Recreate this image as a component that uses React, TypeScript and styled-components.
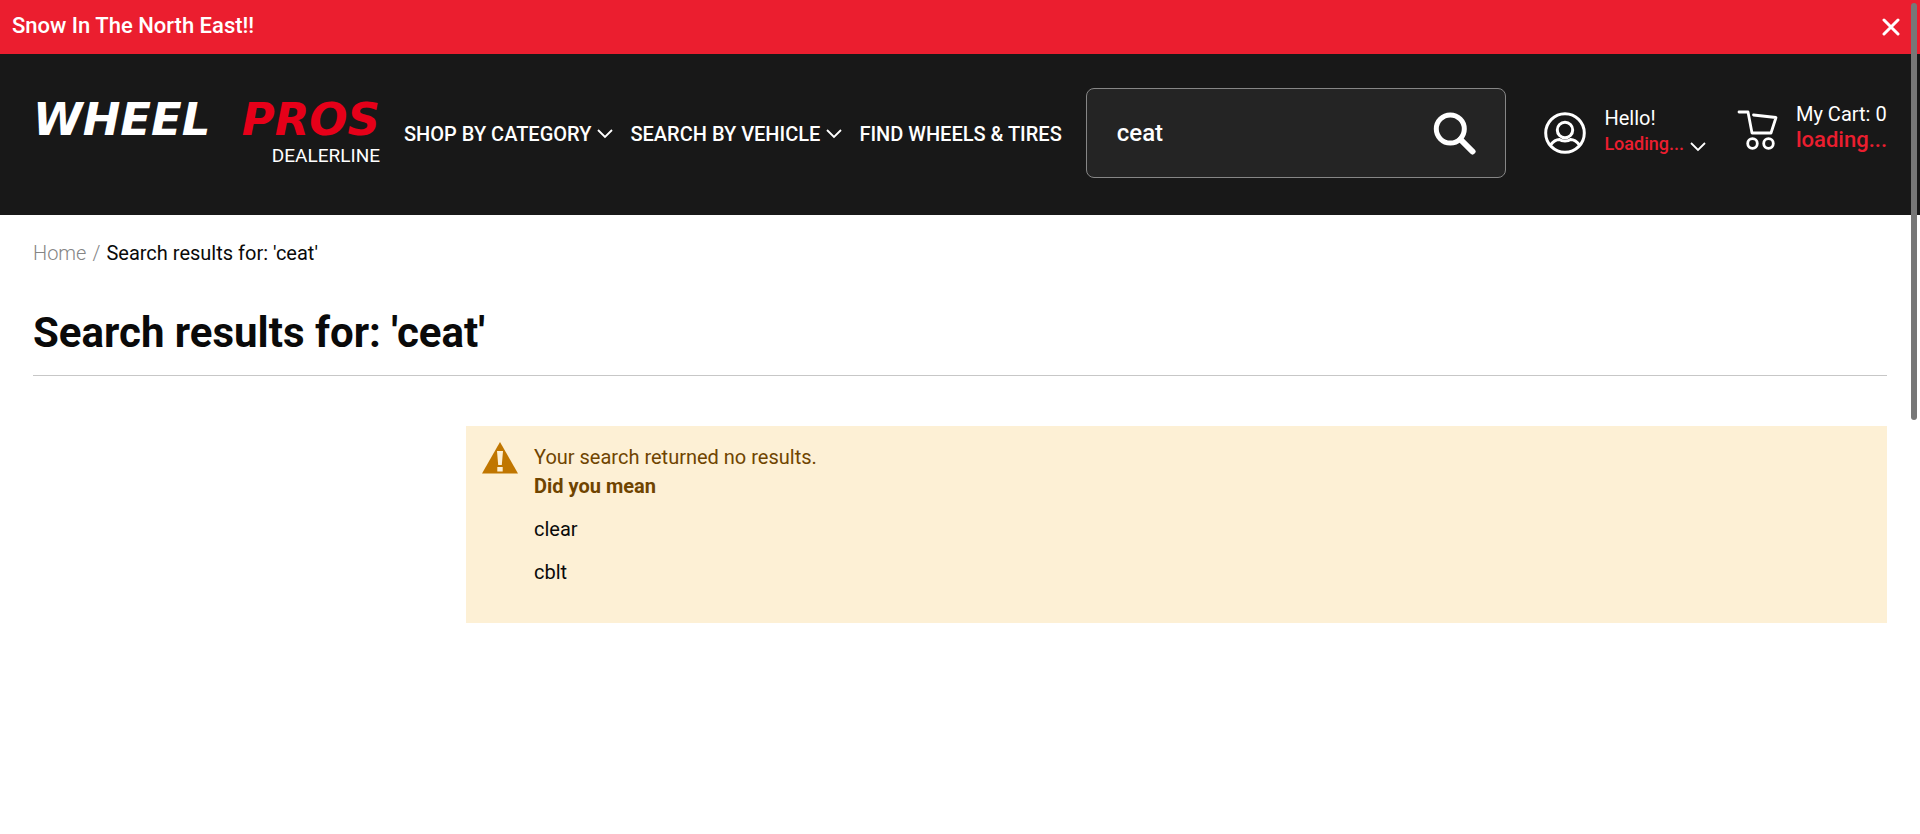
import React from "react";
import styled, { createGlobalStyle } from "styled-components";

const GlobalStyle = createGlobalStyle`
  *, *::before, *::after { box-sizing: border-box; }
  body {
    margin: 0;
    background: #fff;
    color: #0a0a0a;
    font-family: Roboto, "Liberation Sans", sans-serif;
    font-size: 20px;
    line-height: 28px;
  }
  a { color: inherit; text-decoration: none; }
  button { border: 0; padding: 0; background: none; color: inherit; font: inherit; cursor: pointer; }
  svg { display: block; flex: none; }
`;

const Banner = styled.aside`
  display: flex;
  align-items: center;
  justify-content: space-between;
  height: 54px;
  padding: 0 20px 0 12px;
  background: #eb1e2f;
  color: #fff;
  font-size: 22px;
  font-weight: 500;
`;

const BannerText = styled.p`
  margin: 0;
  padding-bottom: 2px;
`;

const Header = styled.header`
  display: flex;
  align-items: center;
  min-height: 161px;
  padding: 0 33px 3px;
  background: #181818;
  color: #fff;
`;

const Brand = styled.a`
  flex: none;
  width: 347px;
  margin-right: 24px;
  padding-top: 4px;
`;

const BrandName = styled.span`
  display: flex;
  justify-content: space-between;
  font: italic bold 45px/36px "DejaVu Sans", sans-serif;
`;

const BrandAccent = styled.span`
  color: #e60019;
`;

const BrandLine = styled.span`
  display: block;
  margin-top: 6px;
  font-size: 19px;
  line-height: 24px;
  text-align: right;
`;

const Nav = styled.nav`
  display: flex;
  flex: none;
  gap: 17px;
  margin-right: 24px;
`;

const NavItem = styled.a`
  display: flex;
  align-items: center;
  gap: 6px;
  padding-top: 2px;
  font-weight: 500;
  white-space: nowrap;
`;

const SearchForm = styled.form`
  display: flex;
  flex: 1;
  min-width: 0;
  align-items: center;
  height: 90px;
  padding: 0 29px 0 30px;
  border: 1px solid #868686;
  border-radius: 8px;
  background: #242424;
`;

const SearchInput = styled.input`
  flex: 1;
  min-width: 0;
  padding: 0;
  border: 0;
  outline: 0;
  background: transparent;
  color: #fff;
  font: 500 24px/28px Roboto, sans-serif;
`;

const Account = styled.button`
  display: flex;
  align-items: center;
  gap: 18px;
  margin-left: 38px;
  text-align: left;
`;

const Cart = styled.a`
  display: flex;
  align-items: center;
  gap: 18px;
  margin-left: 31px;
  padding-bottom: 8px;
`;

const Stack = styled.span`
  display: flex;
  flex-direction: column;
  padding-bottom: 5px;
  line-height: 26px;
  white-space: nowrap;
`;

const Status = styled.span<{ $large?: boolean }>`
  display: flex;
  align-items: center;
  gap: 6px;
  color: #eb1e2f;
  font-size: ${(p) => (p.$large ? 22 : 18)}px;
  font-weight: 500;

  svg { margin-top: 6px; }
`;

const Main = styled.main`
  padding: 24px 33px 0;
`;

const Breadcrumbs = styled.nav`
  display: flex;
  gap: 6px;
`;

const Crumb = styled.a`
  color: #858585;
  font-weight: 300;
`;

const Title = styled.h1`
  margin: 0;
  padding: 40px 0 16px;
  border-bottom: 1px solid #c7c7c7;
  font-size: 42px;
  line-height: 52px;
  font-weight: 700;
`;

const Notice = styled.section`
  display: flex;
  gap: 16px;
  margin: 50px 0 0 433px;
  padding: 16px 16px 36px;
  background: #fdf0d5;
  color: #6f4400;
`;

const NoticeBody = styled.div`
  padding-top: 1px;
  line-height: 29px;
`;

const Lead = styled.p`
  margin: 0;
`;

const Suggestions = styled.dl`
  margin: 0;
`;

const Term = styled.dt`
  font-weight: 700;
`;

const Suggestion = styled.dd`
  margin: 14px 0 0;
  color: #0a0a0a;
`;

const ScrollThumb = styled.div`
  position: fixed;
  top: 3px;
  right: 3px;
  width: 6px;
  height: 50%;
  border-radius: 3px;
  background: #777;
`;

const Chevron = () => (
  <svg width="16" height="10" viewBox="0 0 16 10" fill="none" stroke="#fff" strokeWidth="1.800" aria-hidden="true">
    <path d="M1 1l7 7 7-7" />
  </svg>
);

const CloseIcon = () => (
  <svg width="18" height="18" viewBox="0 0 18 18" stroke="#fff" strokeWidth="3" strokeLinecap="round" aria-hidden="true">
    <path d="M2 2l14 14M16 2L2 16" />
  </svg>
);

const SearchIcon = () => (
  <svg width="43" height="43" viewBox="0 0 43 43" fill="none" stroke="#fff" strokeLinecap="round" aria-hidden="true">
    <circle cx="17.300" cy="17" r="14" strokeWidth="5" />
    <path d="M27.500 27.500L39.500 39.500" strokeWidth="6" />
  </svg>
);

const UserIcon = () => (
  <svg width="42" height="42" viewBox="0 0 42 42" fill="none" stroke="#fff" strokeWidth="3" aria-hidden="true">
    <circle cx="21" cy="21" r="19.300" />
    <circle cx="21" cy="18" r="7.700" />
    <path d="M6.500 33c3-4 6-5.500 9-5.500 2.200 2 8.800 2 11 0 3 0 6 1.500 9 5.500" />
  </svg>
);

const CartIcon = () => (
  <svg width="41" height="41" viewBox="0 0 41 41" fill="none" stroke="#fff" strokeWidth="2.800" strokeLinecap="round" strokeLinejoin="round" aria-hidden="true">
    <path d="M2 3h9l4 21h19l5-15.500-22.500-2.500" />
    <circle cx="15.500" cy="34.500" r="4.800" />
    <circle cx="31.500" cy="34.500" r="4.800" />
  </svg>
);

const WarningIcon = () => (
  <svg width="36" height="32" viewBox="0 0 36 32" aria-hidden="true">
    <path d="M18 0L36 31.500H0z" fill="#c07600" />
    <path d="M15 9h6l-1.200 14h-3.600zM15.300 25h5.400v4.500h-5.400z" fill="#fdf0d5" />
  </svg>
);

export default function App() {
  return (
    <>
      <GlobalStyle />
      <Banner>
        <BannerText>Snow In The North East!!</BannerText>
        <button type="button" aria-label="Close"><CloseIcon /></button>
      </Banner>
      <Header>
        <Brand href="#">
          <BrandName><span>WHEEL</span><BrandAccent>PROS</BrandAccent></BrandName>
          <BrandLine>DEALERLINE</BrandLine>
        </Brand>
        <Nav aria-label="Main">
          <NavItem href="#">SHOP BY CATEGORY<Chevron /></NavItem>
          <NavItem href="#">SEARCH BY VEHICLE<Chevron /></NavItem>
          <NavItem href="#">FIND WHEELS &amp; TIRES</NavItem>
        </Nav>
        <SearchForm role="search">
          <SearchInput type="text" aria-label="Search" defaultValue="ceat" />
          <button type="submit" aria-label="Submit search"><SearchIcon /></button>
        </SearchForm>
        <Account type="button">
          <UserIcon />
          <Stack>
            <span>Hello!</span>
            <Status>Loading...<Chevron /></Status>
          </Stack>
        </Account>
        <Cart href="#">
          <CartIcon />
          <Stack>
            <span>My Cart: 0</span>
            <Status $large>loading...</Status>
          </Stack>
        </Cart>
      </Header>
      <Main>
        <Breadcrumbs aria-label="Breadcrumb">
          <Crumb href="#">Home</Crumb>
          <Crumb as="span">/</Crumb>
          <span>Search results for: 'ceat'</span>
        </Breadcrumbs>
        <Title>Search results for: 'ceat'</Title>
        <Notice>
          <WarningIcon />
          <NoticeBody>
            <Lead>Your search returned no results.</Lead>
            <Suggestions>
              <Term>Did you mean</Term>
              <Suggestion><a href="#">clear</a></Suggestion>
              <Suggestion><a href="#">cblt</a></Suggestion>
            </Suggestions>
          </NoticeBody>
        </Notice>
      </Main>
      <ScrollThumb />
    </>
  );
}
